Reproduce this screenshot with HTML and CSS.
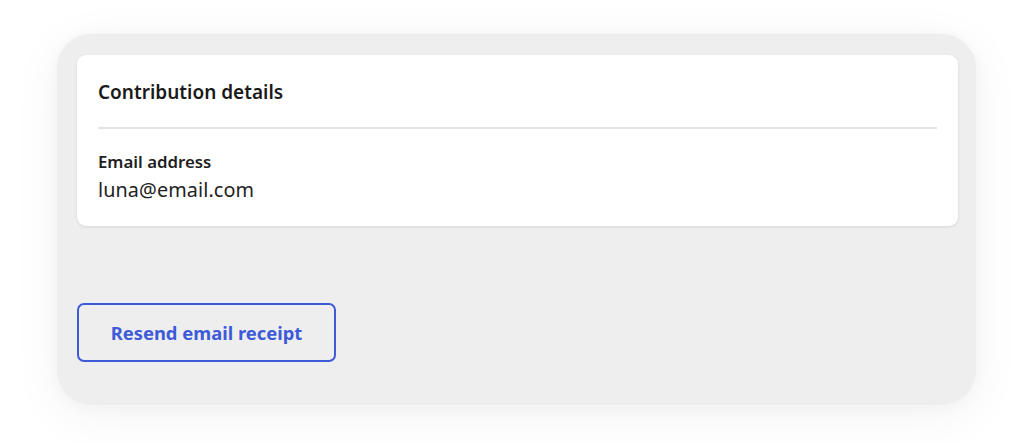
FILE: index.html
```html
<!DOCTYPE html>
<html lang="en">
<head>
<meta charset="utf-8">
<title>Contribution details</title>
<link rel="stylesheet" href="styles.css">
</head>
<body>
<div class="page">
  <section class="panel">
    <div class="card">
      <h2 class="card-title">Contribution details</h2>
      <hr class="divider">
      <div class="field">
        <div class="field-label">Email address</div>
        <div class="field-value">luna@email.com</div>
      </div>
    </div>
    <div class="actions">
      <button class="btn-outline" type="button">Resend email receipt</button>
    </div>
  </section>
</div>
</body>
</html>
```
FILE: styles.css
```css
html, body {
  margin: 0;
  padding: 0;
  background: #ffffff;
}
body {
  font-family: "Noto Sans", "Liberation Sans", sans-serif;
  color: #1c1c1c;
  width: 1020px;
  height: 444px;
  overflow: hidden;
}
.page {
  padding: 33px 0 0 56px;
}
.panel {
  box-sizing: border-box;
  width: 921px;
  height: 373px;
  background: #eeeeee;
  border: 1px solid #f6f6f6;
  border-radius: 36px;
  padding: 21px 18px 0 20px;
  box-shadow: 0 10px 50px rgba(0, 0, 0, 0.05), 0 2px 14px rgba(0, 0, 0, 0.03);
  display: flex;
  flex-direction: column;
}
.card {
  background: #ffffff;
  border-radius: 9px;
  box-shadow: 0 1px 3px rgba(0, 0, 0, 0.10);
  padding: 0 21px;
  height: 171px;
  box-sizing: border-box;
}
.card-title {
  margin: 0;
  padding: 24px 0 0;
  font-size: 19px;
  line-height: 26px;
  font-weight: 600;
  color: #1a1a1a;
  height: 48px;
  box-sizing: content-box;
}
.divider {
  margin: 0;
  border: 0;
  height: 2px;
  background: #e3e3e3;
}
.field {
  padding-top: 22px;
}
.field-label {
  font-size: 16.8px;
  line-height: 22px;
  font-weight: 600;
  color: #1e1e1e;
}
.field-value {
  margin-top: 4px;
  font-size: 19.8px;
  line-height: 26px;
  font-weight: 400;
  color: #222222;
  letter-spacing: 0.1px;
}
.actions {
  padding-top: 77px;
}
.btn-outline {
  width: 259px;
  height: 59px;
  background: transparent;
  border: 2px solid #3d5bd8;
  border-radius: 7px;
  color: #3d5bd8;
  font-family: inherit;
  font-size: 18.4px;
  font-weight: 700;
  padding: 0;
  cursor: pointer;
}
```
